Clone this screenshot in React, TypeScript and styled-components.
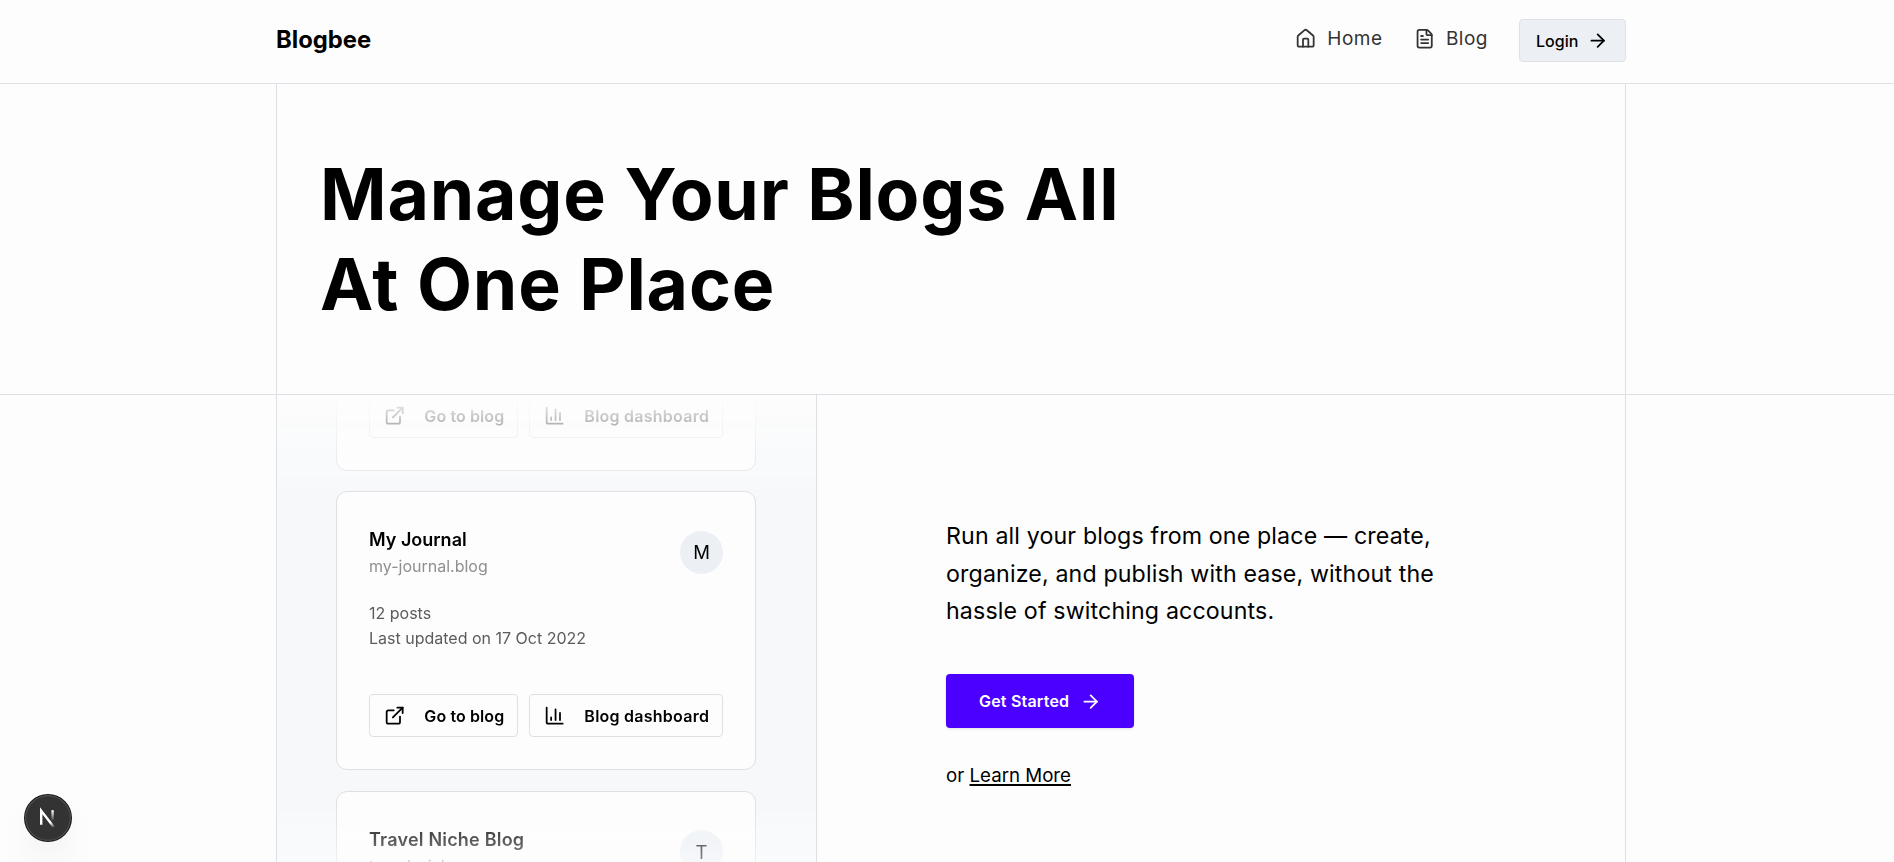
import styled, { createGlobalStyle } from "styled-components"
import {
  ArrowRight,
  ChartColumn,
  ExternalLink,
  FileText,
  House,
} from "lucide-react"

const colors = {
  background: "#fdfdfd",
  border: "#dfe0e5",
  secondary: "#ecf0f5",
  panel: "#f6f8fa",
  primary: "#4b00ff",
  text: "#000",
}

const ICON_SIZE = 21.33

const GlobalStyle = createGlobalStyle`
  * {
    box-sizing: border-box;
  }

  body {
    margin: 0;
    background: ${colors.background};
    color: ${colors.text};
    font-family: Inter, "Liberation Sans", sans-serif;
  }

  h1, h2, p {
    margin: 0;
  }

  svg {
    flex-shrink: 0;
  }
`

const Page = styled.div`
  height: 100vh;
  overflow: hidden;
`

const Header = styled.header`
  height: 84px;
  padding: 19px 268px 0 276px;
  display: flex;
  justify-content: space-between;
  align-items: flex-start;
  border-bottom: 1px solid ${colors.border};
`

const Brand = styled.div`
  font-size: 23.8px;
  font-weight: 700;
  line-height: 42px;
`

const Nav = styled.nav`
  display: flex;
  gap: 31px;
`

const NavLink = styled.a`
  display: flex;
  align-items: center;
  gap: 11px;
  height: 39px;
  color: #333;
  font-size: 19px;
  letter-spacing: 0.5px;
`

const LoginButton = styled.button`
  display: flex;
  align-items: center;
  gap: 8.5px;
  height: 43px;
  width: 107px;
  padding: 0 16px;
  border: 1px solid ${colors.border};
  border-radius: 4px;
  background: ${colors.secondary};
  color: ${colors.text};
  font-family: inherit;
  font-size: 16px;
  font-weight: 500;
`

const Section = styled.section<{ $divided?: boolean }>`
  padding: 0 268px 0 276px;
  border-bottom: ${(props) =>
    props.$divided ? `1px solid ${colors.border}` : "none"};
`

const Frame = styled.div`
  border-left: 1px solid ${colors.border};
  border-right: 1px solid ${colors.border};
`

const Hero = styled(Frame)`
  height: 310px;
  padding: 65px 43px 0;
`

const Title = styled.h1`
  font-size: 71.5px;
  font-weight: 700;
  line-height: 90px;
  letter-spacing: 0.8px;
`

const Columns = styled(Frame)`
  display: flex;
  height: 512px;
`

const Preview = styled.div`
  width: 540px;
  border-right: 1px solid ${colors.border};
`

const fade = "linear-gradient(transparent, #000 20%, #000 80%, transparent)"

const Feed = styled.div`
  height: 100%;
  padding: 0 60px 0 59px;
  overflow: hidden;
  background: ${colors.panel};
  -webkit-mask-image: ${fade};
  mask-image: ${fade};
`

const CardList = styled.div`
  display: flex;
  flex-direction: column;
  gap: 20.6px;
  margin-top: -203.4px;
`

const Card = styled.article`
  display: flex;
  flex: none;
  flex-direction: column;
  height: 279px;
  padding: 35px 32px 32px;
  border: 1px solid ${colors.border};
  border-radius: 11px;
  background: ${colors.background};
`

const CardHeader = styled.div`
  display: flex;
  justify-content: space-between;
  align-items: center;
`

const CardTitle = styled.h2<{ $tracking?: number }>`
  font-size: 18px;
  font-weight: 600;
  line-height: 26px;
  letter-spacing: ${(props) => props.$tracking ?? 0}px;
`

const CardUrl = styled.p`
  color: #8f8f8f;
  font-size: 16px;
  line-height: 26px;
`

const Avatar = styled.div`
  display: flex;
  align-items: center;
  justify-content: center;
  width: 43px;
  height: 43px;
  margin-bottom: 2px;
  border-radius: 50%;
  background: ${colors.secondary};
  font-size: 18.5px;
`

const Meta = styled.p`
  margin-top: 22px;
  color: #5c5c5c;
  font-size: 16px;
  line-height: 25px;
`

const Actions = styled.div`
  display: flex;
  gap: 11.5px;
  margin-top: auto;
`

const ActionButton = styled.button<{ $grow?: boolean }>`
  display: flex;
  align-items: center;
  gap: 19px;
  flex: ${(props) => (props.$grow ? "1" : "0 0 148.5px")};
  height: 43px;
  padding: 0 0 0 14px;
  border: 1px solid ${colors.border};
  border-radius: 4px;
  background: transparent;
  color: ${colors.text};
  font-family: inherit;
  font-size: 16px;
  font-weight: 600;
  letter-spacing: ${(props) => (props.$grow ? "0.25px" : "0.1px")};
  white-space: nowrap;
`

const Pitch = styled.div`
  display: flex;
  flex-direction: column;
  align-items: flex-start;
  padding: 123px 0 0 129px;
`

const Lead = styled.p`
  width: 510px;
  font-size: 23.2px;
  line-height: 37.6px;
  letter-spacing: 0.14px;
`

const PrimaryButton = styled.button`
  display: flex;
  align-items: center;
  justify-content: space-between;
  width: 188px;
  height: 54px;
  margin-top: 43.5px;
  padding: 0 33px;
  border: none;
  border-radius: 4px;
  background: ${colors.primary};
  box-shadow: 0 1px 3px rgba(0, 0, 0, 0.12);
  color: #fff;
  font-family: inherit;
  font-size: 16px;
  font-weight: 600;
  letter-spacing: 0.2px;
`

const Alternative = styled.p`
  margin-top: 34px;
  font-size: 18.7px;
  line-height: 28px;
`

const TextLink = styled.a`
  text-decoration: underline;
  text-decoration-thickness: 2px;
  text-decoration-skip-ink: none;
  text-underline-offset: 2px;
`

const DevBadge = styled.div`
  position: fixed;
  left: 25px;
  bottom: 21px;
  display: flex;
  align-items: center;
  justify-content: center;
  width: 46px;
  height: 46px;
  border-radius: 50%;
  background: #333;
  box-shadow:
    0 0 0 1px #171717,
    inset 0 0 0 1.2px rgba(255, 255, 255, 0.14),
    0 19px 38px -10px rgba(0, 0, 0, 0.14);
`

type Blog = {
  id: number
  title?: string
  url?: string
  tracking?: number
  posts?: number
  updated?: string
  actions?: boolean
}

// the outer cards run past the panel, so they only carry what stays in view
const blogs: Blog[] = [
  { id: 1, actions: true },
  {
    id: 2,
    title: "My Journal",
    url: "my-journal.blog",
    posts: 12,
    updated: "17 Oct 2022",
    actions: true,
  },
  {
    id: 3,
    title: "Travel Niche Blog",
    url: "travel-niche.com",
    tracking: 0.2,
  },
]

function BlogCard({ title, url, tracking, posts, updated, actions }: Blog) {
  return (
    <Card>
      {title && (
        <CardHeader>
          <div>
            <CardTitle $tracking={tracking}>{title}</CardTitle>
            <CardUrl>{url}</CardUrl>
          </div>
          <Avatar>{title[0]}</Avatar>
        </CardHeader>
      )}
      {posts && (
        <Meta>
          {posts} posts
          <br />
          Last updated on {updated}
        </Meta>
      )}
      {actions && (
        <Actions>
          <ActionButton>
            <ExternalLink size={ICON_SIZE} />
            Go to blog
          </ActionButton>
          <ActionButton $grow>
            <ChartColumn size={ICON_SIZE} />
            Blog dashboard
          </ActionButton>
        </Actions>
      )}
    </Card>
  )
}

function NextLogo() {
  return (
    <svg width="48" height="48" viewBox="0 0 40 40" fill="none">
      <defs>
        <linearGradient
          id="diagonal"
          gradientUnits="userSpaceOnUse"
          x1="9.95"
          y1="11.14"
          x2="13"
          y2="15"
        >
          <stop stopColor="#fff" />
          <stop offset="1" stopColor="#fff" stopOpacity="0" />
        </linearGradient>
        <linearGradient
          id="stem"
          gradientUnits="userSpaceOnUse"
          x1="11.8"
          y1="1"
          x2="11.8"
          y2="9.6"
        >
          <stop stopColor="#fff" />
          <stop offset="1" stopColor="#fff" stopOpacity="0" />
        </linearGradient>
      </defs>
      <g transform="translate(12 13)" strokeWidth="2">
        <path d="M13.3 15.2 2.34 1V12.6" stroke="url(#diagonal)" />
        <path d="M11.825 0.5V13.1" stroke="url(#stem)" />
      </g>
    </svg>
  )
}

export default function App() {
  return (
    <Page>
      <GlobalStyle />
      <Header>
        <Brand>Blogbee</Brand>
        <Nav>
          <NavLink>
            <House size={ICON_SIZE} />
            Home
          </NavLink>
          <NavLink>
            <FileText size={ICON_SIZE} />
            Blog
          </NavLink>
          <LoginButton>
            Login
            <ArrowRight size={ICON_SIZE} />
          </LoginButton>
        </Nav>
      </Header>
      <Section $divided>
        <Hero>
          <Title>
            Manage Your Blogs All
            <br />
            At One Place
          </Title>
        </Hero>
      </Section>
      <Section>
        <Columns>
          <Preview>
            <Feed>
              <CardList>
                {blogs.map((blog) => (
                  <BlogCard key={blog.id} {...blog} />
                ))}
              </CardList>
            </Feed>
          </Preview>
          <Pitch>
            <Lead>
              Run all your blogs from one place — create, organize, and publish
              with ease, without the hassle of switching accounts.
            </Lead>
            <PrimaryButton>
              Get Started
              <ArrowRight size={ICON_SIZE} />
            </PrimaryButton>
            <Alternative>
              or <TextLink>Learn More</TextLink>
            </Alternative>
          </Pitch>
        </Columns>
      </Section>
      <DevBadge>
        <NextLogo />
      </DevBadge>
    </Page>
  )
}
